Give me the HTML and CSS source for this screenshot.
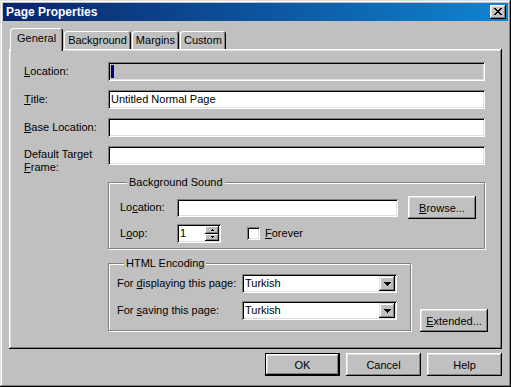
FILE: index.html
```html
<!DOCTYPE html>
<html lang="en">
<head>
  <meta charset="UTF-8" />
  <title>Page Properties</title>
  <link rel="stylesheet" href="styles.css">
</head>
<body>

  <div class="window">
    <div class="titlebar">
      <span class="title">Page Properties</span>
      <button class="close-btn" type="button" aria-label="Close">
        <svg width="8" height="7" viewBox="0 0 8 7" shape-rendering="crispEdges">
          <path d="M0 0h2v1h-2z M6 0h2v1h-2z M1 1h2v1h-2z M5 1h2v1h-2z M2 2h4v1h-4z M3 3h2v1h-2z M2 4h4v1h-4z M1 5h2v1h-2z M5 5h2v1h-2z M0 6h2v1h-2z M6 6h2v1h-2z" fill="#000"/>
        </svg>
      </button>
    </div>

    <div class="content">
      <div class="tabs">
        <div class="tab active">General</div>
        <div class="tab">Background</div>
        <div class="tab">Margins</div>
        <div class="tab">Custom</div>
      </div>

      <div class="panel">
        <div class="form-grid">
          <label class="field-label"><u>L</u>ocation:</label>
          <div class="textbox disabled"><span class="caret"></span></div>

          <label class="field-label"><u>T</u>itle:</label>
          <div class="textbox">Untitled Normal Page</div>

          <label class="field-label"><u>B</u>ase Location:</label>
          <div class="textbox"></div>

          <label class="two-line">Default Target<br><u>F</u>rame:</label>
          <div class="textbox"></div>
        </div>

        <div class="groups">
          <fieldset class="group sound">
            <legend>Background Sound</legend>
            <div class="group-row">
              <label class="sound-label">Lo<u>c</u>ation:</label>
              <div class="textbox sound-input"></div>
              <button class="btn browse" type="button"><u>B</u>rowse...</button>
            </div>
            <div class="group-row loop-row">
              <label class="sound-label">L<u>o</u>op:</label>
              <div class="textbox spin">
                <span class="spin-value">1</span>
                <span class="spin-btns">
                  <span class="spin-btn">
                    <svg width="3" height="2" viewBox="0 0 3 2" shape-rendering="crispEdges"><path d="M1 0h1v1h-1z M0 1h3v1h-3z" fill="#000"/></svg>
                  </span>
                  <span class="spin-btn">
                    <svg width="3" height="2" viewBox="0 0 3 2" shape-rendering="crispEdges"><path d="M0 0h3v1h-3z M1 1h1v1h-1z" fill="#000"/></svg>
                  </span>
                </span>
              </div>
              <span class="checkbox"></span>
              <label class="check-label"><u>F</u>orever</label>
            </div>
          </fieldset>

          <div class="encoding-row">
            <fieldset class="group encoding">
              <legend>HTML Encoding</legend>
              <div class="group-row">
                <label class="enc-label">For <u>d</u>isplaying this page:</label>
                <div class="textbox select">
                  <span class="select-value">Turkish</span>
                  <span class="select-arrow">
                    <svg width="7" height="4" viewBox="0 0 7 4" shape-rendering="crispEdges"><path d="M0 0h7v1h-7z M1 1h5v1h-5z M2 2h3v1h-3z M3 3h1v1h-1z" fill="#000"/></svg>
                  </span>
                </div>
              </div>
              <div class="group-row enc-second">
                <label class="enc-label">For <u>s</u>aving this page:</label>
                <div class="textbox select">
                  <span class="select-value">Turkish</span>
                  <span class="select-arrow">
                    <svg width="7" height="4" viewBox="0 0 7 4" shape-rendering="crispEdges"><path d="M0 0h7v1h-7z M1 1h5v1h-5z M2 2h3v1h-3z M3 3h1v1h-1z" fill="#000"/></svg>
                  </span>
                </div>
              </div>
            </fieldset>
            <button class="btn extended" type="button"><u>E</u>xtended...</button>
          </div>
        </div>
      </div>

      <div class="actions">
        <button class="btn action default" type="button">OK</button>
        <button class="btn action" type="button">Cancel</button>
        <button class="btn action" type="button">Help</button>
      </div>
    </div>
  </div>

</body>
</html>
```

FILE: styles.css
```css
* {
  margin: 0;
  padding: 0;
  box-sizing: border-box;
}

body {
  background-color: #c0c0c0;
  font-family: 'Liberation Sans', Arial, sans-serif;
  font-size: 11px;
  line-height: 13px;
  color: #000;
}

u {
  text-decoration: underline;
  text-underline-offset: 1px;
}

/* window frame */
.window {
  width: 511px;
  height: 387px;
  padding: 3px;
  background-color: #c0c0c0;
  box-shadow: inset -1px -1px #000, inset 1px 1px #dfdfdf,
              inset -2px -2px #808080, inset 2px 2px #fff;
}

.titlebar {
  height: 18px;
  padding: 0 2px 0 3px;
  display: flex;
  justify-content: space-between;
  align-items: center;
  background: linear-gradient(to right, #0a246a, #1084d0);
}

.title {
  color: white;
  font-weight: bold;
  font-size: 12px;
}

.close-btn {
  width: 16px;
  height: 14px;
  border: none;
  background-color: #c0c0c0;
  display: flex;
  align-items: center;
  justify-content: center;
  padding-right: 1px;
  padding-bottom: 1px;
  box-shadow: inset -1px -1px #000, inset 1px 1px #fff,
              inset -2px -2px #808080, inset 2px 2px #dfdfdf;
}

.content {
  padding: 7px 6px 0 6px;
}

/* tabs */
.tabs {
  display: flex;
  align-items: flex-end;
  padding-left: 1px;
  height: 21px;
}

.tab {
  height: 18px;
  padding: 0 4px;
  margin-right: 1px;
  display: flex;
  align-items: center;
  border-radius: 3px 3px 0 0;
  box-shadow: inset 1px 1px #fff, inset -1px 0 #000, inset -2px 0 #808080;
}

.tab.active {
  position: relative;
  z-index: 1;
  height: 23px;
  padding: 0 7px 2px 7px;
  margin-bottom: -2px;
  background-color: #c0c0c0;
}

.panel {
  height: 300px;
  padding: 13px 17px 0 15px;
  box-shadow: inset -1px -1px #000, inset 1px 1px #fff,
              inset -2px -2px #808080, inset 2px 2px #dfdfdf;
}

/* bevels */
.textbox {
  height: 19px;
  padding: 3px 3px 0 3px;
  background-color: white;
  white-space: nowrap;
  box-shadow: inset 1px 1px #808080, inset -1px -1px #fff,
              inset 2px 2px #000, inset -2px -2px #dfdfdf;
}

.textbox.disabled {
  background-color: #c0c0c0;
}

.caret {
  display: block;
  width: 3px;
  height: 13px;
  margin-left: 0;
  background-color: #000080;
}

.btn {
  height: 23px;
  border: none;
  background-color: #c0c0c0;
  font-family: inherit;
  font-size: 11px;
  color: #000;
  box-shadow: inset -1px -1px #000, inset 1px 1px #fff,
              inset -2px -2px #808080, inset 2px 2px #dfdfdf;
}

/* main fields */
.form-grid {
  display: grid;
  grid-template-columns: 84px 377px;
  grid-auto-rows: 19px;
  row-gap: 9px;
}

.field-label {
  display: flex;
  align-items: center;
}

.two-line {
  display: block;
  padding-top: 2px;
}

.groups {
  margin: 11px 0 0 84px;
  width: 377px;
}

.group {
  border: 1px solid #808080;
  box-shadow: inset 1px 1px #fff, 1px 1px #fff;
  min-width: 0;
}

.group legend {
  margin-left: 7px;
  padding: 0 2px;
  background-color: #c0c0c0;
}

.sound {
  width: 377px;
  padding: 7px 7px 5px 11px;
}

.group-row {
  display: flex;
  align-items: center;
}

.sound-label {
  width: 57px;
}

.sound-input {
  width: 221px;
  height: 18px;
}

.browse {
  width: 68px;
  margin-left: 10px;
}

.loop-row {
  margin-top: 5px;
}

.spin {
  width: 44px;
  display: flex;
  justify-content: space-between;
  padding: 2px 2px 2px 3px;
}

.spin-value {
  padding-top: 1px;
}

.spin-btns {
  width: 14px;
  display: flex;
  flex-direction: column;
}

.spin-btn {
  flex: 1;
  display: flex;
  align-items: center;
  justify-content: center;
  background-color: #c0c0c0;
  box-shadow: inset -1px -1px #000, inset 1px 1px #fff, inset -2px -2px #808080;
}

.checkbox {
  width: 13px;
  height: 13px;
  margin-left: 26px;
  background-color: white;
  box-shadow: inset 1px 1px #808080, inset -1px -1px #fff,
              inset 2px 2px #000, inset -2px -2px #dfdfdf;
}

.check-label {
  margin-left: 5px;
}

.encoding-row {
  display: flex;
  align-items: flex-end;
  margin-top: 8px;
}

.encoding {
  width: 303px;
  flex-shrink: 0;
  padding: 4px 8px 10px 8px;
}

.enc-label {
  width: 125px;
}

.enc-second {
  margin-top: 8px;
}

.select {
  width: 155px;
  display: flex;
  justify-content: space-between;
  padding: 2px;
}

.select-value {
  padding: 1px 0 0 1px;
}

.select-arrow {
  width: 16px;
  display: flex;
  align-items: center;
  justify-content: center;
  background-color: #c0c0c0;
  box-shadow: inset -1px -1px #000, inset 1px 1px #dfdfdf,
              inset -2px -2px #808080, inset 2px 2px #fff;
}

.extended {
  width: 68px;
  flex-shrink: 0;
  margin-left: 9px;
  margin-bottom: -1px;
}

/* dialog buttons */
.actions {
  display: flex;
  justify-content: flex-end;
  gap: 6px;
  margin-top: 4px;
}

.action {
  width: 75px;
}

.action.default {
  border: 1px solid #000;
}
```
